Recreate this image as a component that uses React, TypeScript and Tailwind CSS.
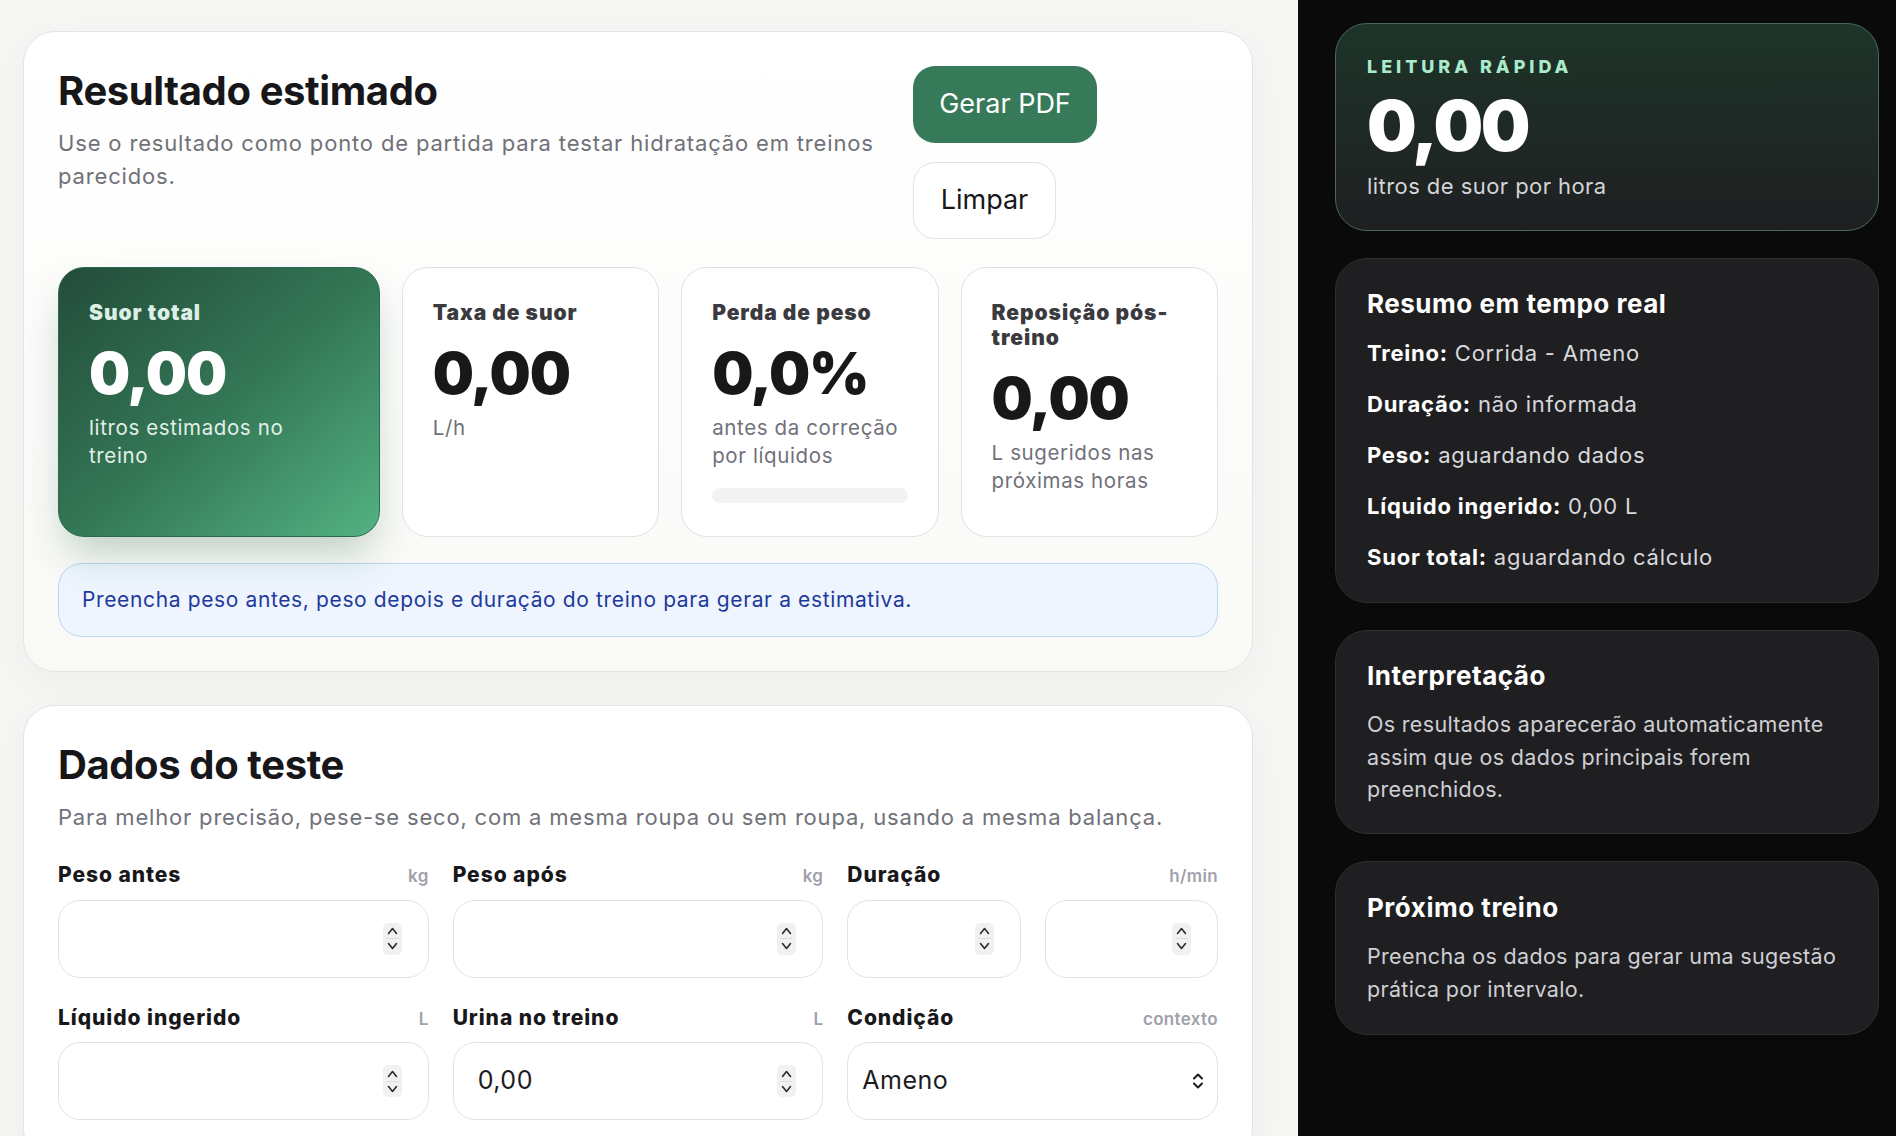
import React from 'react';

function Spinner() {
  return (
    <div className="flex h-[32px] w-[19px] flex-col items-center justify-center gap-[3px] rounded-[5px] bg-[#f1f1f2]">
      <svg width="11" height="8" viewBox="0 0 11 8" fill="none">
        <path d="M1.5 6.5 L5.5 1.5 L9.5 6.5" stroke="#2a2a2f" strokeWidth="1.6" strokeLinecap="round" strokeLinejoin="round" />
      </svg>
      <div className="h-px w-[13px] bg-[#dcdce0]" />
      <svg width="11" height="8" viewBox="0 0 11 8" fill="none">
        <path d="M1.5 1.5 L5.5 6.5 L9.5 1.5" stroke="#2a2a2f" strokeWidth="1.6" strokeLinecap="round" strokeLinejoin="round" />
      </svg>
    </div>
  );
}

function NumberBox({ value }: { value?: string }) {
  return (
    <div className="flex h-[78px] items-center justify-between rounded-[22px] border border-[#e2e2e6] bg-white pl-[24px] pr-[26px]">
      <span className="text-[25px] tracking-[0.02em] text-[#1c1c1f]">{value ?? ''}</span>
      <Spinner />
    </div>
  );
}

function Field({ label, unit, children }: { label: string; unit: string; children: React.ReactNode }) {
  return (
    <div className="flex flex-col gap-[10px]">
      <div className="flex items-baseline justify-between">
        <span className="text-[21px] font-extrabold leading-[25px] tracking-[0.045em] text-[#18181b]">{label}</span>
        <span className="text-[17px] font-semibold tracking-[0.02em] text-[#a1a1aa]">{unit}</span>
      </div>
      {children}
    </div>
  );
}

function Metric({ label, value, sub, bar }: { label: string; value: string; sub: string; bar?: boolean }) {
  return (
    <div className="flex h-[270px] flex-col rounded-[26px] border border-[#e2e2e6] bg-white px-[30px] pt-[32px]">
      <div className="text-[21px] font-black leading-[25px] tracking-[0.045em] text-[#3a3a3f]">{label}</div>
      <div className="mt-[19px] text-[58px] font-black leading-[58px] tracking-[-0.02em] text-[#18181b]">{value}</div>
      <div className="mt-[12px] text-[20.5px] leading-[28px] tracking-[0.03em] text-[#71717a]">{sub}</div>
      {bar && <div className="mt-[18px] h-[15px] w-full rounded-full bg-[#f3f3f4]" />}
    </div>
  );
}

export default function App() {
  return (
    <div className="flex h-[1136px] w-full overflow-hidden font-['Inter',sans-serif]">
      {/* Main column */}
      <main className="flex w-[1298px] shrink-0 flex-col gap-[33px] bg-[#f6f6f5] pl-[23px] pr-[45px] pt-[31px]">
        <section className="rounded-[32px] border border-[#e4e4e7] bg-gradient-to-b from-white to-[#f9f9f6] p-[34px] shadow-[0_12px_40px_rgba(0,0,0,0.04)]">
          <div className="flex items-start gap-6">
            <div className="flex-1 pt-[3px]">
              <h1 className="text-[40px] font-bold leading-[44px] tracking-[-0.01em] text-[#17171a]">Resultado estimado</h1>
              <p className="mt-[14px] text-[22px] leading-[33px] tracking-[0.038em] text-[#71717a]">
                Use o resultado como ponto de partida para testar hidratação em treinos parecidos.
              </p>
            </div>
            <div className="flex w-[305px] flex-wrap gap-[19px]">
              <button className="h-[77px] w-[184px] rounded-[22px] bg-[#367a5a] text-[27px] text-white">Gerar PDF</button>
              <button className="h-[77px] w-[143px] rounded-[22px] border border-[#e2e2e6] bg-white text-[27px] text-[#18181b]">Limpar</button>
            </div>
          </div>

          <div className="mt-[28px] grid grid-cols-[1.25fr_1fr_1fr_1fr] gap-[22px]">
            <div className="flex h-[270px] flex-col rounded-[26px] border border-[#2d6b4c] bg-gradient-to-br from-[#234c3a] via-[#337655] to-[#53b283] pl-[30px] pr-[44px] pt-[32px] shadow-[0_22px_40px_-8px_rgba(40,100,65,0.30)]">
              <div className="text-[21px] font-black leading-[25px] tracking-[0.045em] text-[#dcefe4]">Suor total</div>
              <div className="mt-[19px] text-[58px] font-black leading-[58px] tracking-[-0.02em] text-white">0,00</div>
              <div className="mt-[12px] text-[20.5px] leading-[28px] tracking-[0.03em] text-[#e2f0e8]">litros estimados no treino</div>
            </div>
            <Metric label="Taxa de suor" value="0,00" sub="L/h" />
            <Metric label="Perda de peso" value="0,0%" sub="antes da correção por líquidos" bar />
            <Metric label="Reposição pós-treino" value="0,00" sub="L sugeridos nas próximas horas" />
          </div>

          <div className="mt-[26px] flex h-[74px] items-center rounded-[24px] border border-[#bcd4f5] bg-[#eef5fe] px-[23px] text-[21px] tracking-[0.03em] text-[#1f3a9c]">
            Preencha peso antes, peso depois e duração do treino para gerar a estimativa.
          </div>
        </section>

        <section className="shrink-0 rounded-[32px] border border-[#e4e4e7] bg-white p-[34px] pb-[40px] shadow-[0_12px_40px_rgba(0,0,0,0.04)]">
          <div className="pt-[3px]">
            <h2 className="text-[40px] font-bold leading-[44px] tracking-[-0.01em] text-[#17171a]">Dados do teste</h2>
            <p className="mt-[14px] text-[22px] leading-[33px] tracking-[0.037em] text-[#71717a]">
              Para melhor precisão, pese-se seco, com a mesma roupa ou sem roupa, usando a mesma balança.
            </p>
          </div>

          <div className="mt-[28px] grid grid-cols-3 gap-x-6 gap-y-[27px]">
            <Field label="Peso antes" unit="kg">
              <NumberBox />
            </Field>
            <Field label="Peso após" unit="kg">
              <NumberBox />
            </Field>
            <Field label="Duração" unit="h/min">
              <div className="grid grid-cols-2 gap-6">
                <NumberBox />
                <NumberBox />
              </div>
            </Field>
            <Field label="Líquido ingerido" unit="L">
              <NumberBox />
            </Field>
            <Field label="Urina no treino" unit="L">
              <NumberBox value="0,00" />
            </Field>
            <Field label="Condição" unit="contexto">
              <div className="flex h-[78px] items-center justify-between rounded-[22px] border border-[#e2e2e6] bg-white pl-[14px] pr-[12px]">
                <span className="text-[25px] tracking-[0.02em] text-[#1c1c1f]">Ameno</span>
                <svg width="14" height="22" viewBox="0 0 14 22" fill="none">
                  <path d="M3 8.5 L7 4.5 L11 8.5" stroke="#1c1c1f" strokeWidth="2" strokeLinecap="round" strokeLinejoin="round" />
                  <path d="M3 13.5 L7 17.5 L11 13.5" stroke="#1c1c1f" strokeWidth="2" strokeLinecap="round" strokeLinejoin="round" />
                </svg>
              </div>
            </Field>
          </div>
        </section>
      </main>

      {/* Sidebar */}
      <aside className="flex flex-1 flex-col gap-[27px] bg-[#0a0a0b] pl-[37px] pr-[17px] pt-[23px]">
        <div className="rounded-[32px] border border-[#48695a] bg-gradient-to-b from-[#1d3429] to-[#1e1f21] px-[31px] pb-[29px] pt-[32px]">
          <div className="text-[18px] font-extrabold leading-[22px] tracking-[0.22em] text-[#a9ebcb]">LEITURA RÁPIDA</div>
          <div className="mt-[12px] text-[70px] font-black leading-[72px] tracking-[-0.035em] text-white">0,00</div>
          <div className="mt-[9px] text-[22px] leading-[30px] tracking-[0.02em] text-[#d4d4d8]">litros de suor por hora</div>
        </div>

        <div className="rounded-[32px] border border-[#2f2f33] bg-[#1f1f22] px-[31px] pb-[28px] pt-[29px]">
          <h3 className="text-[26px] font-bold leading-[32px] tracking-[0.02em] text-white">Resumo em tempo real</h3>
          <div className="mt-[17px] flex flex-col gap-[18px] text-[22px] leading-[33px] tracking-[0.035em] text-[#d8d8dc]">
            <p><b className="font-bold text-white">Treino:</b> Corrida - Ameno</p>
            <p><b className="font-bold text-white">Duração:</b> não informada</p>
            <p><b className="font-bold text-white">Peso:</b> aguardando dados</p>
            <p><b className="font-bold text-white">Líquido ingerido:</b> 0,00 L</p>
            <p><b className="font-bold text-white">Suor total:</b> aguardando cálculo</p>
          </div>
        </div>

        <div className="rounded-[32px] border border-[#2f2f33] bg-[#1f1f22] px-[31px] pb-[27px] pt-[29px]">
          <h3 className="text-[26px] font-bold leading-[32px] tracking-[0.02em] text-white">Interpretação</h3>
          <p className="mt-[16px] text-[21.5px] leading-[32.5px] tracking-[0.015em] text-[#cfcfd4]">
            Os resultados aparecerão automaticamente assim que os dados principais forem preenchidos.
          </p>
        </div>

        <div className="rounded-[32px] border border-[#2f2f33] bg-[#1f1f22] px-[31px] pb-[28px] pt-[30px]">
          <h3 className="text-[26px] font-bold leading-[32px] tracking-[0.02em] text-white">Próximo treino</h3>
          <p className="mt-[16px] text-[21.5px] leading-[33px] tracking-[0.015em] text-[#cfcfd4]">
            Preencha os dados para gerar uma sugestão prática por intervalo.
          </p>
        </div>
      </aside>
    </div>
  );
}
